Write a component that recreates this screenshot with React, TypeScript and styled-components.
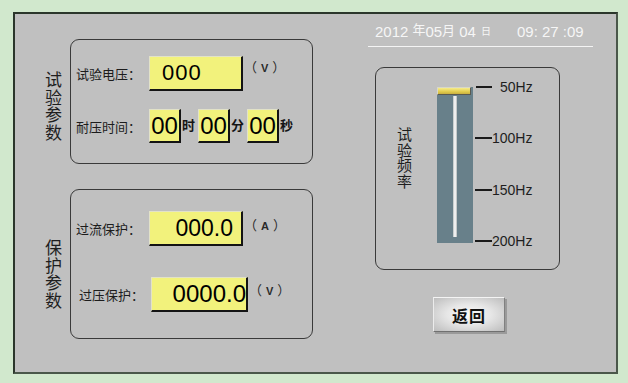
import React from 'react';
import styled, { createGlobalStyle } from 'styled-components';

const Global = createGlobalStyle`
  html, body { margin: 0; padding: 0; background: #d1e8cd; }
  body {
    width: 628px; height: 383px; overflow: hidden;
    font-family: "Liberation Sans", "Noto Sans CJK SC", sans-serif;
  }
`;

const CJK = `"Noto Sans CJK SC", "Liberation Sans", sans-serif`;

const Page = styled.div`
  width: 628px;
  height: 383px;
  box-sizing: border-box;
  padding: 12px 0 0 13px;
  background: #d1e8cd;
`;

const Panel = styled.div`
  width: 605px;
  height: 362px;
  box-sizing: border-box;
  background: #c0c0c0;
  border: 2px solid #2b362b;
  border-right-color: #4a574a;
  border-bottom-color: #4a574a;
  display: flex;
`;

const LeftCol = styled.div`
  display: flex;
  flex-direction: column;
  gap: 25px;
  padding: 25px 0 0 30px;
`;

const Section = styled.div`
  display: flex;
  align-items: flex-start;
`;

const VLabel = styled.div<{ $top: number; $size: number; $lh: number; $w: number }>`
  flex: none;
  box-sizing: border-box;
  width: ${p => p.$w}px;
  padding-right: ${p => p.$w - p.$size - 1}px;
  margin-top: ${p => p.$top}px;
  font-family: ${CJK};
  font-size: ${p => p.$size}px;
  line-height: ${p => p.$lh}px;
  word-break: break-all;
  color: #1e1e1e;
`;

const GroupBox = styled.div<{ $h: number; $pt: number; $gap: number }>`
  box-sizing: border-box;
  width: 243px;
  height: ${p => p.$h}px;
  border: 1px solid #3a3a3a;
  border-radius: 9px;
  display: flex;
  flex-direction: column;
  gap: ${p => p.$gap}px;
  padding: ${p => p.$pt}px 0 0 5px;
`;

const Row = styled.div<{ $h: number; $pl?: number }>`
  display: flex;
  align-items: center;
  height: ${p => p.$h}px;
  padding-left: ${p => p.$pl ?? 0}px;
`;

const FieldLabel = styled.div<{ $w: number }>`
  width: ${p => p.$w}px;
  font-family: ${CJK};
  font-size: 13px;
  color: #1c1c1c;
  white-space: nowrap;
`;

const ValueBox = styled.div<{ $w: number; $h: number; $align: 'left' | 'right' | 'center'; $size: number; $pl?: number; $pr?: number; $ls?: number }>`
  box-sizing: border-box;
  width: ${p => p.$w}px;
  height: ${p => p.$h}px;
  background: #f2f27c;
  border-top: 1px solid #e2e2c8;
  border-left: 1px solid #e2e2c8;
  border-right: 2px solid #141414;
  border-bottom: 2px solid #141414;
  display: flex;
  align-items: center;
  justify-content: ${p => (p.$align === 'left' ? 'flex-start' : p.$align === 'right' ? 'flex-end' : 'center')};
  padding-left: ${p => p.$pl ?? 0}px;
  padding-right: ${p => p.$pr ?? 0}px;
  font-family: "Liberation Sans", sans-serif;
  font-size: ${p => p.$size}px;
  letter-spacing: ${p => p.$ls ?? 0}px;
  color: #000;
  line-height: 1;
  overflow: visible;
  white-space: nowrap;
`;

const Unit = styled.div<{ $top: number }>`
  align-self: flex-start;
  margin-top: ${p => p.$top}px;
  margin-left: 1px;
  font-family: ${CJK};
  font-size: 13px;
  line-height: 13px;
  letter-spacing: 4px;
  color: #2a2a2a;
  white-space: nowrap;
`;

const UnitLetter = styled.span`
  font-family: "Liberation Sans", sans-serif;
  font-weight: bold;
  font-size: 11px;
`;

const Suffix = styled.div`
  width: 13px;
  margin: 0 3px 4px 1px;
  font-family: ${CJK};
  font-size: 13px;
  font-weight: bold;
  color: #151515;
  line-height: 13px;
`;

const RightCol = styled.div`
  display: flex;
  flex-direction: column;
  align-items: flex-start;
  margin-left: 55px;
`;

const DateRow = styled.div`
  box-sizing: border-box;
  width: 225px;
  height: 24px;
  margin-top: 9px;
  padding: 1px 0 0 7px;
  border-bottom: 1px solid #f4f4f4;
  display: flex;
  align-items: flex-start;
  color: #f6f6f6;
  font-size: 15px;
  line-height: 16px;
  white-space: pre;
`;

const DateUnit = styled.span<{ $size: number; $raise: number; $ml: number }>`
  font-family: ${CJK};
  font-size: ${p => p.$size}px;
  line-height: 16px;
  position: relative;
  top: ${p => -p.$raise}px;
  margin-left: ${p => p.$ml}px;
`;

const TimeText = styled.span`
  margin-left: 26px;
`;

const FreqBox = styled.div`
  box-sizing: border-box;
  width: 185px;
  height: 203px;
  margin: 20px 0 0 7px;
  border: 1px solid #3a3a3a;
  border-radius: 9px;
  display: flex;
  align-items: flex-start;
  padding-left: 21px;
`;

const Track = styled.div`
  box-sizing: border-box;
  width: 36px;
  height: 156px;
  margin: 19px 0 0 24px;
  background: #68808a;
  display: flex;
  flex-direction: column;
`;

const Handle = styled.div`
  box-sizing: border-box;
  width: 34px;
  height: 8px;
  background: linear-gradient(#f6ec8a, #e2cc4c 60%, #c9b040);
  border: 1px solid #5a5a50;
  border-top-color: #d8d8c8;
  border-left-color: #d8d8c8;
`;

const Groove = styled.div`
  align-self: center;
  width: 4px;
  height: 141px;
  margin-top: 1px;
  background: linear-gradient(90deg, #b8c0c0, #f2f2f2 40%, #f2f2f2 60%, #b0b8b8);
`;

const Ticks = styled.div`
  height: 168px;
  margin: 12px 0 0 2px;
  display: flex;
  flex-direction: column;
  justify-content: space-between;
`;

const TickRow = styled.div`
  display: flex;
  align-items: center;
  height: 14px;
`;

const TickLine = styled.div<{ $indent: number }>`
  width: ${p => 17 - p.$indent}px;
  margin-left: ${p => p.$indent}px;
  height: 2px;
  background: #1a1a1a;
`;

const TickText = styled.span<{ $ml: number }>`
  margin-left: ${p => p.$ml}px;
  font-size: 14px;
  line-height: 14px;
  color: #1e1e1e;
`;

const BackButton = styled.button`
  box-sizing: border-box;
  width: 72px;
  height: 35px;
  margin: 27px 0 0 65px;
  padding: 0;
  background: radial-gradient(ellipse at 50% 50%, #fbfbfb 0%, #e6e6e6 45%, #bdbdbd 100%);
  border: 1px solid;
  border-color: #f4f4f4 #808080 #707070 #ececec;
  box-shadow: 2px 2px 0 #9a9a9a;
  font-family: ${CJK};
  font-size: 16px;
  font-weight: bold;
  letter-spacing: 1px;
  color: #111;
  cursor: pointer;
`;

const ticks = [
  { label: '50Hz', indent: 1, ml: 8 },
  { label: '100Hz', indent: 0, ml: 0 },
  { label: '150Hz', indent: 0, ml: 0 },
  { label: '200Hz', indent: 0, ml: 0 },
];

export default function App() {
  return (
    <Page>
      <Global />
      <Panel>
        <LeftCol>
          <Section>
            <VLabel $top={31} $size={17} $lh={17.7} $w={25}>试验参数</VLabel>
            <GroupBox $h={125} $pt={16} $gap={18}>
              <Row $h={35}>
                <FieldLabel $w={73}>试验电压：</FieldLabel>
                <ValueBox $w={94} $h={35} $align="left" $size={22} $pl={12} $ls={1}>000</ValueBox>
                <Unit $top={4}>（<UnitLetter>V</UnitLetter>）</Unit>
              </Row>
              <Row $h={34}>
                <FieldLabel $w={73}>耐压时间：</FieldLabel>
                <ValueBox $w={32} $h={34} $align="center" $size={24}>00</ValueBox>
                <Suffix>时</Suffix>
                <ValueBox $w={32} $h={34} $align="center" $size={24}>00</ValueBox>
                <Suffix>分</Suffix>
                <ValueBox $w={32} $h={34} $align="center" $size={24}>00</ValueBox>
                <Suffix>秒</Suffix>
              </Row>
            </GroupBox>
          </Section>
          <Section>
            <VLabel $top={49} $size={17} $lh={17.7} $w={25}>保护参数</VLabel>
            <GroupBox $h={150} $pt={21} $gap={31}>
              <Row $h={35}>
                <FieldLabel $w={73}>过流保护：</FieldLabel>
                <ValueBox $w={94} $h={35} $align="right" $size={23} $pr={8}>000.0</ValueBox>
                <Unit $top={7}>（<UnitLetter>A</UnitLetter>）</Unit>
              </Row>
              <Row $h={35} $pl={3}>
                <FieldLabel $w={72}>过压保护：</FieldLabel>
                <ValueBox $w={97} $h={35} $align="right" $size={24} $pr={0}>0000.0</ValueBox>
                <Unit $top={6}>（<UnitLetter>V</UnitLetter>）</Unit>
              </Row>
            </GroupBox>
          </Section>
        </LeftCol>
        <RightCol>
          <DateRow>
            2012
            <DateUnit $size={13} $raise={3} $ml={4}>年</DateUnit>
            05
            <DateUnit $size={13} $raise={2} $ml={0}>月</DateUnit>
            {' 04'}
            <DateUnit $size={10} $raise={1} $ml={5}>日</DateUnit>
            <TimeText>09: 27 :09</TimeText>
          </DateRow>
          <FreqBox>
            <VLabel $top={58} $size={15} $lh={15.7} $w={16}>试验频率</VLabel>
            <Track>
              <Handle />
              <Groove />
            </Track>
            <Ticks>
              {ticks.map(t => (
                <TickRow key={t.label}>
                  <TickLine $indent={t.indent} />
                  <TickText $ml={t.ml}>{t.label}</TickText>
                </TickRow>
              ))}
            </Ticks>
          </FreqBox>
          <BackButton>返回</BackButton>
        </RightCol>
      </Panel>
    </Page>
  );
}
